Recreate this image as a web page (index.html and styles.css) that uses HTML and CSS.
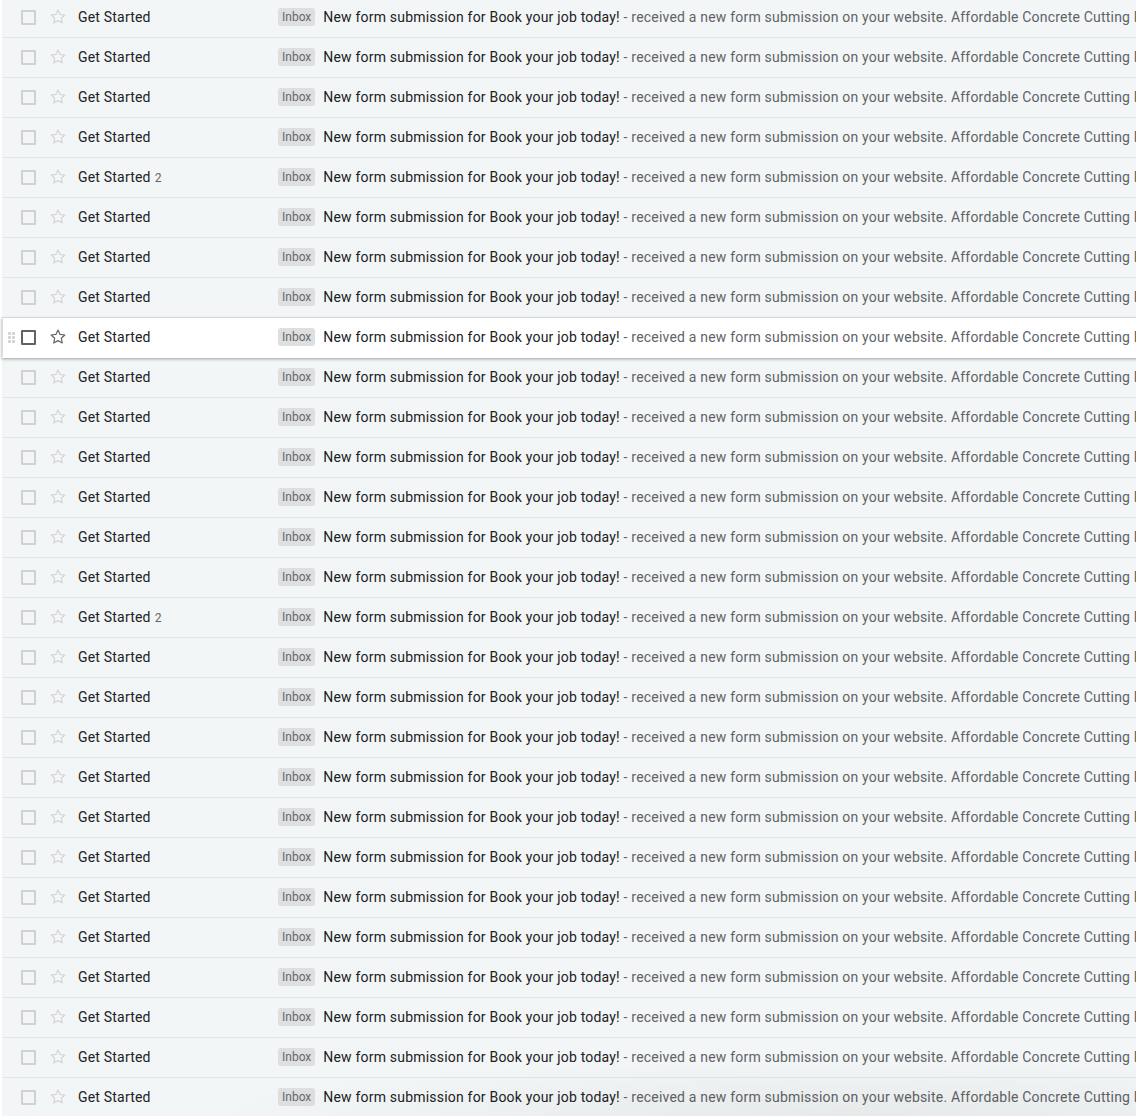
FILE: index.html
```html
<!DOCTYPE html>
<html>
<head>
<meta charset="utf-8">
<link rel="stylesheet" href="styles.css">
</head>
<body>
<div class="list" id="list"></div>
<script>
var list = document.getElementById('list');
var star = '<svg class="star" viewBox="0 0 24 24" width="20" height="20"><path d="M12 3.6l2.47 5.3 5.8.66-4.3 3.95 1.16 5.73L12 16.35l-5.13 2.89 1.16-5.73-4.3-3.95 5.8-.66z" fill="none" stroke="currentColor" stroke-width="1.4" stroke-linejoin="round"/></svg>';
var html = '';
for (var i = 0; i < 28; i++) {
  var hover = i === 8;
  var cnt = (i === 4 || i === 15) ? '<span class="count">2</span>' : '';
  html += '<div class="row' + (hover ? ' hover' : '') + '">' +
    '<span class="drag">' + (hover ? '<i></i><i></i><i></i><i></i><i></i><i></i>' : '') + '</span>' +
    '<span class="check"></span>' + star +
    '<span class="sender">Get Started' + cnt + '</span>' +
    '<span class="label">Inbox</span>' +
    '<span class="subject">New form submission for Book your job today!</span>' +
    '<span class="snippet">&nbsp;- received a new form submission on your website. Affordable Concrete Cutting NZ</span>' +
    '</div>';
}
list.innerHTML = html;
</script>
</body>
</html>
```
FILE: styles.css
```css
html, body {
  margin: 0;
  padding: 0;
  background: #ffffff;
  overflow: hidden;
  width: 1136px;
  height: 1116px;
}
body {
  font-family: Roboto, "Noto Sans", Arial, sans-serif;
  font-size: 14px;
  color: #202124;
  position: relative;
}
.list {
  margin: -2px 0 0 2px;
  width: 1200px;
}
.row {
  display: flex;
  align-items: center;
  height: 38px;
  padding-bottom: 1px;
  border-bottom: 1px solid #e3e6e7;
  background: #f3f6f6;
  white-space: nowrap;
  position: relative;
}
.row.hover {
  background: #ffffff;
  z-index: 2;
  box-shadow: inset 1px 0 0 #dadce0, inset -1px 0 0 #dadce0, 0 1px 2px rgba(60,64,67,.3), 0 1px 3px 1px rgba(60,64,67,.15);
  border-bottom-color: transparent;
}
.drag {
  width: 19px;
  height: 12px;
  display: grid;
  grid-template-columns: 3px 3px;
  grid-auto-rows: 3px;
  column-gap: 1px;
  row-gap: 1px;
  padding-left: 6px;
  box-sizing: border-box;
  align-content: center;
}
.drag i {
  display: block;
  width: 3px;
  height: 3px;
  background: #d0d2d4;
  border-radius: 1px;
}
.check {
  width: 11px;
  height: 11px;
  border: 2px solid #cfd1d2;
  border-radius: 1px;
  flex: none;
}
.row.hover .check {
  border-color: #5f6368;
}
.star {
  flex: none;
  margin-left: 12px;
  color: #d2d4d6;
}
.row.hover .star {
  color: #5f6368;
}
.sender {
  margin-left: 10px;
  width: 200px;
  flex: none;
  color: #202124;
  letter-spacing: 0.2px;
}
.count {
  font-size: 12px;
  color: #5f6368;
  margin-left: 4px;
  letter-spacing: 0;
}
.label {
  background: #dedfe0;
  color: #666a6e;
  font-size: 12px;
  border-radius: 3px;
  padding: 0 4px;
  height: 18px;
  line-height: 18px;
  margin-right: 8px;
  flex: none;
}
.subject {
  color: #202124;
  letter-spacing: 0.2px;
}
.snippet {
  color: #5f6368;
  letter-spacing: 0.2px;
}
body::after {
  content: "";
  position: absolute;
  left: 200px;
  right: 0;
  bottom: 0;
  height: 60px;
  background: radial-gradient(ellipse 70% 100% at 70% 100%, rgba(0,0,0,0.05), rgba(0,0,0,0));
  pointer-events: none;
}
```
